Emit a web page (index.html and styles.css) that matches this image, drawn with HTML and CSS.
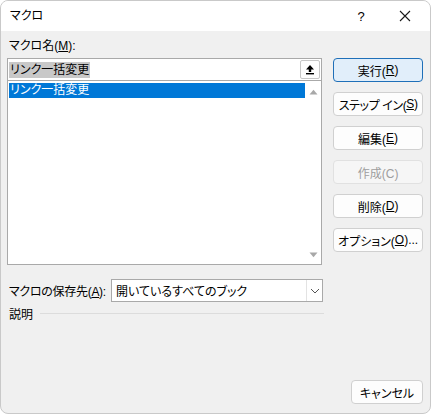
FILE: index.html
```html
<!DOCTYPE html>
<html lang="ja">
<head>
<meta charset="utf-8">
<link rel="stylesheet" href="styles.css">
</head>
<body>
<div class="window">
  <div class="titlebar">
    <span class="title">マクロ</span>
    <span class="help">?</span>
    <span class="close"><svg width="12" height="12" viewBox="0 0 12 12"><path d="M1 1 L11 11 M11 1 L1 11" stroke="#1a1a1a" stroke-width="1.1" fill="none"/></svg></span>
  </div>
  <div class="content">
    <div class="main">
      <div class="left">
        <div class="label">マクロ名(<u>M</u>):</div>
        <div class="input">
          <span class="sel">リンク一括変更</span>
          <span class="upbtn"><svg width="10" height="11" viewBox="0 0 10 11"><path d="M5 1 L9 5.5 H6.2 V8 H3.8 V5.5 H1 Z" fill="#000"/><rect x="1" y="9" width="8" height="1.4" fill="#000"/></svg></span>
        </div>
        <div class="listbox">
          <div class="items">
            <div class="item selected">リンク一括変更</div>
          </div>
          <div class="scroll">
            <svg width="9" height="6" viewBox="0 0 9 6"><path d="M0.5 5.5 L4.5 0.8 L8.5 5.5 Z" fill="#a8a8a8"/></svg>
            <svg width="9" height="6" viewBox="0 0 9 6"><path d="M0.5 0.5 L4.5 5.2 L8.5 0.5 Z" fill="#a8a8a8"/></svg>
          </div>
        </div>
      </div>
      <div class="right">
        <div class="btn default">実行(<u>R</u>)</div>
        <div class="btn tight">ステップ イン(<u>S</u>)</div>
        <div class="btn">編集(<u>E</u>)</div>
        <div class="btn disabled">作成(C)</div>
        <div class="btn">削除(<u>D</u>)</div>
        <div class="btn">オプション(<u>O</u>)...</div>
      </div>
    </div>
    <div class="store">
      <span class="store-label">マクロの保存先(<u>A</u>):</span>
      <div class="combo">
        <span class="combo-text">開いているすべてのブック</span>
        <span class="combo-arrow"><svg width="10" height="6" viewBox="0 0 10 6"><path d="M1 1 L5 5 L9 1" stroke="#555" stroke-width="1" fill="none"/></svg></span>
      </div>
    </div>
    <div class="desc">
      <span>説明</span>
      <span class="rule"></span>
    </div>
    <div class="spacer"></div>
    <div class="footer">
      <div class="btn cancel">キャンセル</div>
    </div>
  </div>
</div>
</body>
</html>
```
FILE: styles.css
```css
* { box-sizing: border-box; }
html, body {
  margin: 0;
  padding: 0;
  background: #ffffff;
}
body {
  width: 431px;
  height: 414px;
  overflow: hidden;
  font-family: "Liberation Sans", "Noto Sans CJK JP", sans-serif;
  font-feature-settings: "palt";
  font-size: 12px;
  color: #000;
}
u { text-decoration: underline; text-underline-offset: 1px; }
.window {
  width: 431px;
  height: 414px;
  border: 1px solid #c9c9c9;
  border-radius: 8px;
  overflow: hidden;
  display: flex;
  flex-direction: column;
  background: #f0f0f0;
}
.titlebar {
  height: 30px;
  background: #ffffff;
  display: flex;
  align-items: center;
  flex: none;
}
.title {
  margin-left: 9px;
  flex: 1;
  font-size: 12px;
  line-height: 16px;
}
.help {
  width: 14px;
  text-align: center;
  font-family: "Liberation Sans", sans-serif;
  font-size: 13px;
  margin-right: 31px;
}
.close {
  display: flex;
  margin-right: 19px;
}
.content {
  flex: 1;
  display: flex;
  flex-direction: column;
  padding: 6px 7px 9px 6px;
}
.main {
  display: flex;
}
.left {
  width: 316px;
  display: flex;
  flex-direction: column;
}
.label {
  height: 18px;
  line-height: 18px;
  padding-left: 2px;
  margin-bottom: 3px;
  white-space: nowrap;
}
.input {
  height: 23px;
  background: #fff;
  border: 1px solid #a9a9a9;
  display: flex;
  align-items: center;
  padding-left: 1px;
}
.sel {
  background: #c8c8c8;
  line-height: 16px;
  padding: 0 1px;
  flex: none;
}
.upbtn {
  margin-left: auto;
  margin-right: 1px;
  width: 20px;
  height: 19px;
  border: 1px solid #c6c6c6;
  border-radius: 2px;
  display: flex;
  align-items: center;
  justify-content: center;
  background: #fdfdfd;
}
.listbox {
  height: 184px;
  background: #fff;
  border: 1px solid #a9a9a9;
  border-top: none;
  display: flex;
  padding: 2px 0 1px 1px;
}
.items {
  flex: 1;
}
.item {
  height: 15px;
  line-height: 15px;
  padding-left: 1px;
}
.item.selected {
  background: #0078d7;
  color: #fff;
}
.scroll {
  width: 16px;
  display: flex;
  flex-direction: column;
  justify-content: space-between;
  align-items: center;
  padding: 6px 0 5px;
  background: #fff;
}
.scroll svg { display: block; }
.right {
  margin-left: 11px;
  margin-top: 21px;
  width: 90px;
  display: flex;
  flex-direction: column;
  gap: 10px;
}
.btn {
  height: 24px;
  border: 1px solid #d0d0d0;
  border-radius: 4px;
  background: #fdfdfd;
  display: flex;
  align-items: center;
  justify-content: center;
  font-size: 12px;
  white-space: nowrap;
}
.btn.tight {
  letter-spacing: -0.4px;
}
.btn.default {
  background: #e1eefa;
  border-color: #1f6fb8;
}
.btn.disabled {
  color: #9e9e9e;
  border-color: #e1e1e1;
  background: #f6f6f6;
}
.store {
  display: flex;
  align-items: center;
  margin-top: 14px;
  height: 23px;
}
.store-label {
  width: 104px;
  padding-left: 2px;
  white-space: nowrap;
  letter-spacing: -0.3px;
}
.combo {
  width: 212px;
  height: 23px;
  background: #fff;
  border: 1px solid #a9a9a9;
  display: flex;
  align-items: center;
}
.combo-text {
  flex: 1;
  padding-left: 4px;
}
.combo-arrow {
  width: 16px;
  height: 21px;
  border-left: 1px solid #e3e3e3;
  display: flex;
  align-items: center;
  justify-content: center;
}
.desc {
  display: flex;
  align-items: center;
  height: 18px;
  margin-top: 2px;
  padding-left: 2px;
}
.rule {
  height: 1px;
  background: #dcdcdc;
  margin-left: 7px;
  width: 284px;
  flex: none;
}
.spacer { flex: 1; }
.footer {
  display: flex;
  justify-content: flex-end;
}
.btn.cancel {
  width: 72px;
}
```
